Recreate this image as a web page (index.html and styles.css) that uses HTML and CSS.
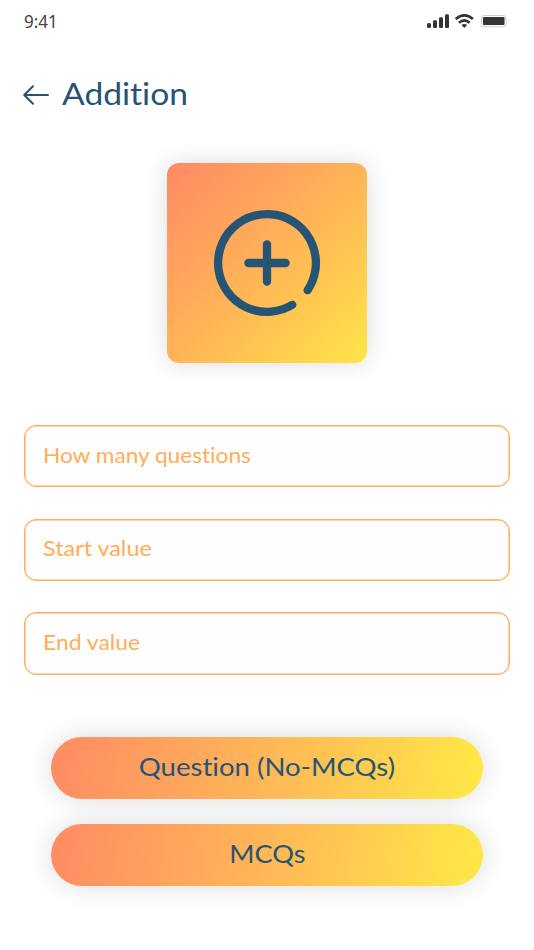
FILE: index.html
```html
<!DOCTYPE html>
<html lang="en">
<head>
<meta charset="utf-8">
<title>Addition</title>
<link rel="stylesheet" href="styles.css">
</head>
<body>
<div class="statusbar">
  <span class="time">9:41</span>
  <svg class="indicators" viewBox="0 0 82 16" width="82" height="16" aria-hidden="true">
    <g fill="#353334">
      <rect x="0" y="9" width="4" height="5" rx="1.5"/>
      <rect x="6" y="6.3" width="4" height="7.7" rx="1.3"/>
      <rect x="12" y="3.3" width="4" height="10.7" rx="1.3"/>
      <rect x="18" y="0.3" width="4" height="13.7" rx="1.3"/>
    </g>
    <g fill="none" stroke="#353334" stroke-width="2.7">
      <path d="M28.7 5.1Q37.3 -2.5 45.9 5.1"/>
      <path d="M32 8.7Q37.3 4.2 42.6 8.7"/>
    </g>
    <path d="M34.5 11.1Q37.3 9 40.1 11.1L37.3 14Z" fill="#353334"/>
    <rect x="54.5" y="1.5" width="24.5" height="11.3" rx="2.5" fill="#fff" stroke="#d2cdcf"/>
    <rect x="56" y="3" width="21.5" height="8" rx=".8" fill="#353334"/>
    <path d="M81.5 6v2" stroke="#d2cdcf" stroke-width=".5"/>
  </svg>
</div>
<header class="header">
  <svg class="back" viewBox="0 0 26 20" width="26" height="20" aria-label="Back">
    <path d="M10 1.3L1.2 10L10 18.7M1.2 10H25" fill="none" stroke="#265475" stroke-width="2" stroke-linecap="round" stroke-linejoin="round"/>
  </svg>
  <h1 class="title">Addition</h1>
</header>
<main class="content">
  <div class="tile">
    <svg viewBox="0 0 110 110" width="110" height="110" aria-hidden="true">
      <path d="M95.6 82.2A48.9 48.9 0 1 0 80.3 96.8M55 36.4V73.6M36.4 55H73.6" fill="none" stroke="#265475" stroke-width="8.3" stroke-linecap="round"/>
    </svg>
  </div>
  <div class="form">
    <div class="field"><span class="hint hint-count">How many questions</span></div>
    <div class="field"><span class="hint hint-start">Start value</span></div>
    <div class="field"><span class="hint hint-end">End value</span></div>
  </div>
  <div class="actions">
    <button class="button" type="button"><span class="label label-question">Question (No-MCQs)</span></button>
    <button class="button" type="button"><span class="label label-mcq">MCQs</span></button>
  </div>
</main>
</body>
</html>
```
FILE: styles.css
```css
* { box-sizing: border-box; }
body {
  margin: 0;
  min-height: 950px;
  background: #fff;
  font-family: Lato, sans-serif;
  font-variant-ligatures: none;
  color: #265475;
}
.statusbar {
  display: flex;
  justify-content: space-between;
  height: 42px;
  padding: 8px 25px 0 24px;
}
.time {
  font: 18.5px/25px "Noto Sans", sans-serif;
  color: #454344;
  transform: scaleX(.92);
  transform-origin: left;
}
.indicators { margin-top: 6px; }
.header {
  display: flex;
  align-items: center;
  gap: 13px;
  height: 40px;
  margin-top: 31px;
  padding-left: 23px;
}
.back { margin-top: 3px; }
.title {
  margin: 0;
  font-size: 30px;
  line-height: 40px;
  font-weight: 400;
  transform: scaleX(1.12);
  transform-origin: left;
}
.content {
  display: flex;
  flex-direction: column;
  align-items: center;
  padding: 50px 24px 0;
}
.tile {
  display: grid;
  place-items: center;
  width: 200px;
  height: 200px;
  border-radius: 12px;
  background: linear-gradient(135deg, #ff8965, #ffb457 50%, #ffe548);
  box-shadow: 0 0 24px rgba(0, 0, 0, .14);
}
.form {
  display: grid;
  gap: 31.3px;
  width: 100%;
  margin-top: 62.2px;
}
.field {
  display: flex;
  align-items: center;
  height: 62.3px;
  padding: 0 18px 3px;
  border: 1px solid #ffad59;
  border-radius: 12px;
  background: #fefefe;
  box-shadow: inset 0 0 0 .5px #ffad59, 0 0 20px rgba(0, 0, 0, .012);
}
.hint {
  color: #ffad59;
  font-size: 20.5px;
  transform-origin: left;
}
.hint-count { transform: scaleX(1.105); }
.hint-start { transform: scaleX(1.14); }
.hint-end { transform: scaleX(1.118); }
.actions {
  display: grid;
  gap: 25px;
  width: 432px;
  margin-top: 62.3px;
}
.button {
  height: 62px;
  padding: 0 0 3px;
  border: 0;
  border-radius: 31px;
  background: linear-gradient(98deg, #ff8b64, #ffb757 50%, #ffe548 96%);
  box-shadow: 0 0 26px rgba(0, 0, 0, .14);
  color: #265475;
  font: 24.5px Lato, sans-serif;
  font-variant-ligatures: none;
}
.label { display: inline-block; }
.label-question { transform: scaleX(1.125); }
.label-mcq { transform: scaleX(1.11); }
```
